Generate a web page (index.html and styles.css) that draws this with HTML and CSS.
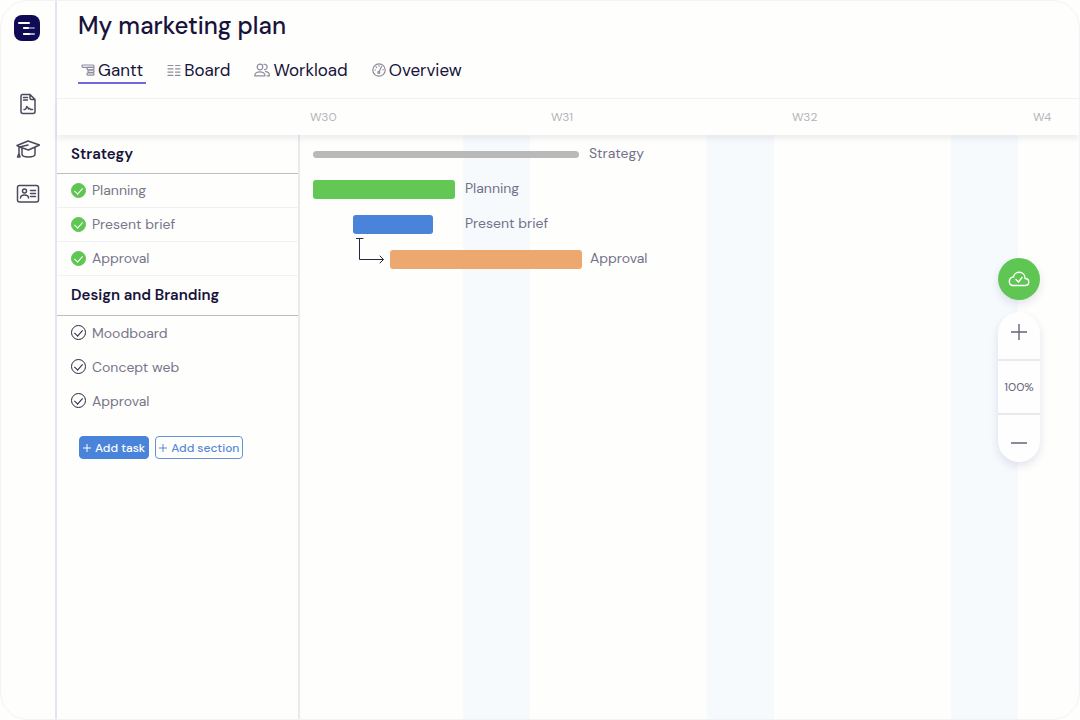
FILE: index.html
```
<!DOCTYPE html>
<html lang="en">

<head>
    <meta charset="UTF-8">
    <meta name="viewport" content="width=device-width, initial-scale=1.0">
    <title>My marketing plan</title>
    <link rel="stylesheet" href="styles.css">
</head>

<body>
    <div class="app">
        <nav class="sidebar" aria-label="Main">
            <a class="logo" href="#" aria-label="Home">
                <svg width="26" height="26" viewBox="0 0 26 26">
                    <rect width="26" height="26" rx="8" fill="#0f0c55" />
                    <rect x="4" y="7" width="12" height="2" rx="1" fill="#fff" />
                    <rect x="9" y="12" width="12" height="2" rx="1" fill="#7773a8" />
                    <rect x="9" y="12" width="6" height="2" rx="1" fill="#fff" />
                    <rect x="9" y="18" width="12" height="2" rx="1" fill="#aaa7ce" />
                    <rect x="9" y="18" width="7" height="2" rx="1" fill="#fff" />
                </svg>
            </a>
            <a href="#" aria-label="Documents">
                <svg class="line-icon" width="24" height="22" viewBox="0 0 24 22">
                    <path d="M6.500 1.500H14L19 6.500V18.500Q19 20.500 17 20.500H7Q5 20.500 5 18.500V3Q5 1.500 6.500 1.500ZM14 1.500V5Q14 6.500 15.500 6.500H19M7.500 4.500H11.500M7.500 7H11.500M8 16.500H9Q10.500 15.500 10.700 13.500Q11.500 13.500 12.500 16Q13.500 14.500 14.500 16.500H16.500" />
                </svg>
            </a>
            <a href="#" aria-label="Learn">
                <svg class="line-icon" width="24" height="22" viewBox="0 0 24 22">
                    <path d="M1 7.500L12 3L23.500 7L12.500 12L3.500 9L12 7M3 8.800V15.500M3 15.500L1.500 19H4L3 15.500ZM6 10.500V16C6 20 19 20 19 16V9.500M1 7.500L3.500 9" />
                </svg>
            </a>
            <a href="#" aria-label="Contacts">
                <svg class="line-icon" width="24" height="22" viewBox="0 0 24 22">
                    <rect x="1.500" y="2.500" width="21" height="16.500" rx="2" />
                    <circle cx="8.500" cy="8" r="2" />
                    <path d="M4.500 15C4.500 11 12.500 11 12.500 15M14.500 7.500H19.500M14.500 10.500H19.500M14.500 13.500H19.500" />
                </svg>
            </a>
        </nav>

        <main class="main">
            <header class="header">
                <h1>My marketing plan</h1>
                <nav class="tabs" aria-label="Views">
                    <a class="tab active" href="#">
                        <svg width="14" height="14" viewBox="0 0 14 14">
                            <rect x="1" y="2" width="12" height="2.400" rx="1" />
                            <rect x="6" y="4.400" width="7" height="2.400" rx="1" />
                            <rect x="7" y="7" width="6" height="2.400" rx="1" />
                            <rect x="6" y="9.800" width="7" height="2.400" rx="1" />
                        </svg>
                        Gantt
                    </a>
                    <a class="tab" href="#">
                        <svg width="14" height="14" viewBox="0 0 14 14">
                            <path d="M1 2.500H6M1 5.800H6M1 9.100H6M1 12.400H6M8.500 2.500H13M8.500 5.800H13M8.500 9.100H13M8.500 12.400H13" />
                        </svg>
                        Board
                    </a>
                    <a class="tab" href="#">
                        <svg width="16" height="14" viewBox="0 0 16 14">
                            <circle cx="6" cy="4" r="2.800" />
                            <path d="M.7 12.800C.7 7.500 11 7.500 11 12.800ZM10 1.300C14 .6 14 7 10.500 6.700M11.500 8.600C14 8.600 15.400 10.500 15.400 12.800H13" />
                        </svg>
                        Workload
                    </a>
                    <a class="tab" href="#">
                        <svg width="14" height="14" viewBox="0 0 14 14">
                            <circle cx="7" cy="7" r="6.200" />
                            <path d="M9.500 3.500L7 9M3 7H3.500M4 4L4.500 4.500M7 2.600V3.200M10.800 6.800H11.300" />
                            <circle cx="6.800" cy="9.400" r="1" />
                        </svg>
                        Overview
                    </a>
                </nav>
            </header>

            <div class="weeks">
                <span>W30</span>
                <span>W31</span>
                <span>W32</span>
                <span>W4</span>
            </div>

            <div class="plan">
                <section class="tasks">
                    <h2>Strategy</h2>
                    <ul class="task-list done">
                        <li><label><input type="checkbox" checked>Planning</label></li>
                        <li><label><input type="checkbox" checked>Present brief</label></li>
                        <li><label><input type="checkbox" checked>Approval</label></li>
                    </ul>
                    <h2>Design and Branding</h2>
                    <ul class="task-list">
                        <li><label><input type="checkbox">Moodboard</label></li>
                        <li><label><input type="checkbox">Concept web</label></li>
                        <li><label><input type="checkbox">Approval</label></li>
                    </ul>
                    <div class="actions">
                        <button class="btn btn-primary"><svg width="8" height="8" viewBox="0 0 8 8"><path d="M4 0V8M0 4H8" /></svg>Add task</button>
                        <button class="btn"><svg width="8" height="8" viewBox="0 0 8 8"><path d="M4 0V8M0 4H8" /></svg>Add section</button>
                    </div>
                </section>

                <section class="timeline">
                    <div class="row">
                        <div class="bar summary" style="margin-left: 13px; width: 266px"></div>
                        <span>Strategy</span>
                    </div>
                    <div class="row">
                        <div class="bar green" style="margin-left: 13px; width: 142px"></div>
                        <span>Planning</span>
                    </div>
                    <div class="row wide-gap">
                        <div class="bar blue" style="margin-left: 53px; width: 80px"></div>
                        <span>Present brief</span>
                    </div>
                    <div class="row narrow-gap">
                        <!-- dependency arrow from Present brief to Approval -->
                        <svg class="link" width="30" height="28" viewBox="0 0 30 28">
                            <path d="M0 1.500H7M3.500 1.500V22.500H27M24 19L27.500 22.500L24 26" />
                        </svg>
                        <div class="bar orange" style="margin-left: 90px; width: 192px"></div>
                        <span>Approval</span>
                    </div>

                    <div class="controls">
                        <button class="saved" aria-label="Saved">
                            <svg width="22" height="18" viewBox="0 0 22 18">
                                <path d="M5 15.500H17C22 15.500 22 8.500 17 8.500C17.500 1 6.500 0 5.500 7C0 7.500 0 15.500 5 15.500ZM8 9.500L10.500 12L14 7.500" />
                            </svg>
                        </button>
                        <div class="zoom">
                            <button aria-label="Zoom in"><svg width="16" height="16" viewBox="0 0 16 16"><path d="M8 0V16M0 8H16" /></svg></button>
                            <span class="level">100%</span>
                            <button aria-label="Zoom out"><svg width="16" height="16" viewBox="0 0 16 16"><path d="M0 8H16" /></svg></button>
                        </div>
                    </div>
                </section>
            </div>
        </main>
    </div>
</body>

</html>
```
FILE: styles.css
```
* {
    box-sizing: border-box;
}

body {
    margin: 0;
    background: #fefefd;
    color: #17133a;
    font-family: "DM Sans", Inter, sans-serif;
    font-size: 14px;
}

a {
    color: inherit;
    text-decoration: none;
}

button {
    font: inherit;
    cursor: pointer;
}

svg {
    display: block;
    flex: none;
    fill: none;
    stroke: currentColor;
    stroke-linecap: round;
    stroke-linejoin: round;
}

.app {
    display: flex;
    min-height: 100vh;
    border: 1px solid #f3f3f5;
    border-radius: 28px;
    overflow: hidden;
}

/* Sidebar */
.sidebar {
    flex: none;
    display: flex;
    flex-direction: column;
    align-items: center;
    gap: 23px;
    width: 56px;
    padding-top: 14px;
    border-right: 2px solid #e6e5ee;
}

.logo {
    margin: 0 2px 29px 0;
}

.logo svg {
    stroke: none;
}

.line-icon {
    color: #4c4a5c;
    stroke-width: 1.5;
}

/* Header */
.main {
    flex: 1;
    min-width: 0;
    display: flex;
    flex-direction: column;
}

.header {
    padding: 8px 21px 14px;
    border-bottom: 1px solid #f2f2f6;
}

h1 {
    margin: 0 0 16px;
    font-size: 24px;
    line-height: 34px;
    font-weight: 500;
}

.tabs {
    display: flex;
    gap: 18px;
}

.tab {
    display: flex;
    align-items: center;
    gap: 3px;
    padding: 0 3px 1px;
    border-bottom: 2px solid transparent;
    font-size: 17px;
    line-height: 22px;
}

.tab.active {
    border-color: #6f68de;
}

.tab svg {
    color: #8e8c9f;
    stroke-width: 1.2;
}

.weeks {
    position: relative;
    z-index: 1;
    display: flex;
    padding-left: 243px;
    color: #b4b4bb;
    font-size: 12px;
    line-height: 36px;
    box-shadow: 0 4px 6px rgba(30, 30, 60, 0.07);
}

.weeks span {
    flex: 0 0 241px;
    padding-left: 10px;
}

.weeks span:last-child {
    flex: 1 1 0;
}

/* Task list */
.plan {
    flex: 1;
    display: flex;
}

.tasks {
    flex: none;
    width: 243px;
    border-right: 2px solid #e9e9ee;
}

h2 {
    margin: 0;
    padding-left: 14px;
    border-bottom: 1px solid #bdbcc5;
    font-size: 15px;
    line-height: 38px;
    font-weight: 600;
}

.task-list + h2 {
    line-height: 39px;
}

.task-list {
    margin: 0;
    padding: 0;
    list-style: none;
    color: #77758a;
    line-height: 16px;
}

.task-list li {
    height: 34px;
}

.done li {
    border-bottom: 1px solid #f0f0f5;
}

.task-list label {
    display: flex;
    align-items: center;
    gap: 6px;
    height: 100%;
    padding: 0 0 1px 14px;
}

.task-list input {
    appearance: none;
    display: flex;
    justify-content: center;
    width: 15px;
    height: 15px;
    margin: 0;
    border: 1px solid #28253f;
    border-radius: 50%;
    color: #28253f;
}

.task-list input::before {
    content: "";
    width: 4px;
    height: 7px;
    margin-top: 2px;
    border: solid currentColor;
    border-width: 0 1px 1px 0;
    transform: rotate(42deg);
}

.task-list input:checked {
    background: #5fc653;
    border-color: #5fc653;
    color: #fff;
}

.actions {
    display: flex;
    gap: 6px;
    padding: 18px 22px;
}

.btn {
    display: flex;
    align-items: center;
    gap: 4px;
    height: 23px;
    padding: 0 3px;
    border: 1px solid #6391da;
    border-radius: 4px;
    background: #fefefd;
    color: #5688d6;
    font-size: 12px;
    font-weight: 500;
    white-space: nowrap;
}

.btn-primary {
    background: #4a83da;
    border-color: #4a83da;
    color: #fff;
}

/* Timeline, weekends are shaded */
.timeline {
    position: relative;
    flex: 1;
    min-width: 0;
    padding-top: 2px;
    background: linear-gradient(to right, transparent 163px, #f6fafd 163px, #f6fafd 230px, transparent 230px) 0 0 / 244px 100%;
    color: #73718a;
}

.row {
    position: relative;
    display: flex;
    align-items: center;
    gap: 10px;
    height: 35px;
}

.row span {
    padding-bottom: 3px;
}

.wide-gap {
    gap: 32px;
}

.narrow-gap {
    gap: 8px;
}

.bar {
    flex: none;
    height: 19px;
    border-radius: 3px;
}

.summary {
    height: 7px;
    border-radius: 4px;
    background: #b9b9b9;
}

.green {
    background: #63c755;
}

.blue {
    background: #4a83da;
}

.orange {
    background: #eda86f;
}

.link {
    position: absolute;
    left: 56px;
    top: -5px;
    color: #28253f;
}

.controls {
    position: absolute;
    top: 123px;
    right: 39px;
    width: 42px;
    color: #65637a;
}

.controls button {
    display: flex;
    align-items: center;
    justify-content: center;
    width: 100%;
    padding: 0;
    border: none;
    background: none;
    color: inherit;
}

.controls .saved {
    height: 42px;
    margin-bottom: 12px;
    border-radius: 50%;
    background: #5fc653;
    color: #fff;
    box-shadow: 0 4px 8px rgba(40, 30, 110, 0.12);
}

.saved svg {
    stroke-width: 1.4;
}

.zoom {
    border-radius: 21px;
    background: #fefefe;
    font-size: 12px;
    box-shadow: 0 4px 8px rgba(40, 30, 110, 0.12);
}

.zoom button {
    height: 47px;
    padding-bottom: 8px;
}

.zoom button:last-child {
    padding: 8px 0 0;
}

.zoom svg {
    stroke-width: 1.4;
}

.level {
    display: block;
    border: solid #e9e9ee;
    border-width: 2px 0;
    line-height: 52px;
    text-align: center;
}
```
